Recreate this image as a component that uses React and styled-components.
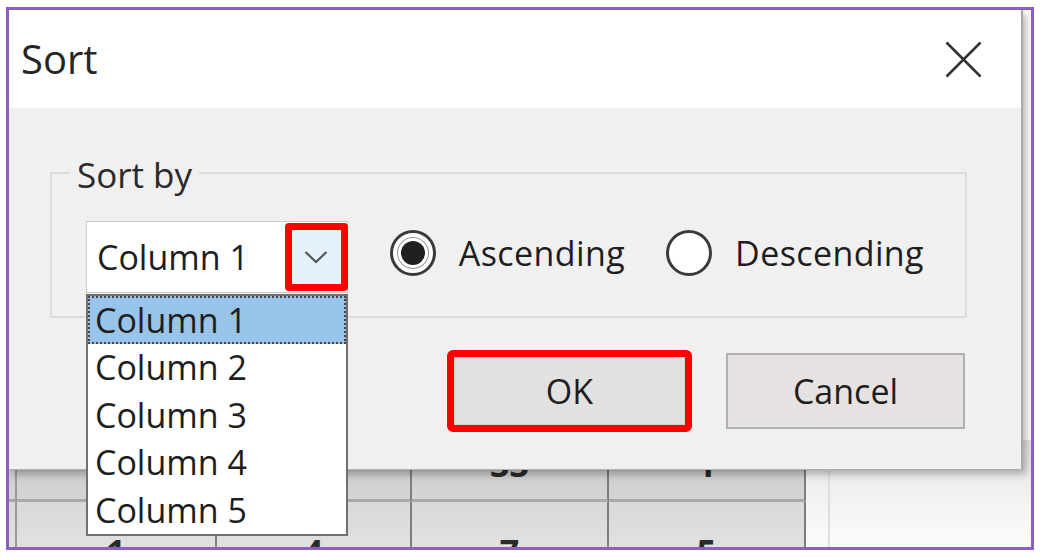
import React from 'react';
import styled, { createGlobalStyle } from 'styled-components';

const Global = createGlobalStyle`
  html, body { margin: 0; padding: 0; background: #ffffff; }
  body { font-family: "Open Sans", "Noto Sans", sans-serif; color: #1e1e1e; }
`;

const Frame = styled.div`
  position: relative;
  margin: 7px 0 0 6px;
  width: 1028px;
  height: 543px;
  box-sizing: border-box;
  border: 3px solid #8d5fc1;
  overflow: hidden;
`;

/* ---------- spreadsheet behind the dialog ---------- */
const Sheet = styled.div`
  display: grid;
  grid-template-columns: 8px 200px 195px 197px 197px 24px 1fr;
  grid-template-rows: 430px 62px 1fr;
  height: 100%;
`;

const Blank = styled.div`
  grid-column: 1 / -1;
  background: #ffffff;
`;

const Cell = styled.div`
  box-sizing: border-box;
  display: flex;
  justify-content: center;
  font-size: 34px;
  line-height: 34px;
  font-weight: 700;
  color: #2a2a2a;
  padding-top: ${p => (p.$row === 1 ? '7px' : '32px')};
  background: ${p =>
    p.$sel
      ? p.$row === 1
        ? 'linear-gradient(#c7c7c7, #d5d5d5)'
        : 'linear-gradient(#d9d9d9, #e6e3e3)'
      : p.$row === 1
        ? 'linear-gradient(#e6e6e6, #f2f2f2)'
        : 'linear-gradient(#f3f3f3, #ffffff)'};
  border-right: ${p => (p.$line ? `2px solid ${p.$line}` : 'none')};
  border-bottom: ${p => (p.$row === 1 && p.$sel ? '3px solid #a9a9a9' : 'none')};
`;

const sheetCols = [
  { sel: true, line: '#9a9a9a' },
  { sel: true, line: '#7d7d7d' },
  { sel: true, line: '#7d7d7d' },
  { sel: true, line: '#7d7d7d' },
  { sel: true, line: '#7d7d7d' },
  { sel: false, line: '#dedede' },
  { sel: false, line: null },
];
const row1 = ['', '', '', '33', '1', '', ''];
const row2 = ['', '1', '4', '7', '5', '', ''];

/* ---------- dialog ---------- */
const Dialog = styled.div`
  position: absolute;
  top: 0;
  left: 0;
  width: 1014px;
  height: 460px;
  box-sizing: border-box;
  background: #f0f0f0;
  border-right: 2px solid #a8a8a8;
  border-bottom: 1px solid #b0b0b0;
  box-shadow: 3px 4px 8px rgba(0, 0, 0, 0.3);
  display: flex;
  flex-direction: column;
`;

const TitleBar = styled.div`
  height: 98px;
  flex: none;
  background: #ffffff;
  display: flex;
  align-items: center;
  justify-content: space-between;
  padding: 0 39px 0 12px;
`;

const Title = styled.div`
  font-size: 40px;
  line-height: 48px;
  color: #262626;
`;

const CloseIcon = styled.svg`
  width: 37px;
  height: 37px;
  display: block;
`;

const Body = styled.div`
  flex: 1;
  padding: 64px 54px 0 41px;
  display: flex;
  flex-direction: column;
`;

const GroupBox = styled.div`
  position: relative;
  height: 146px;
  box-sizing: border-box;
  border: 2px solid #dddddd;
  display: flex;
  align-items: flex-start;
  padding: 47px 0 0 34px;
`;

const Legend = styled.div`
  position: absolute;
  top: -21px;
  left: 18px;
  padding: 0 7px;
  background: #f0f0f0;
  font-size: 35px;
  line-height: 44px;
  color: #2a2a2a;
`;

const Combo = styled.div`
  position: relative;
  width: 262px;
  height: 72px;
  box-sizing: border-box;
  background: #ffffff;
  border: 1px solid #cacaca;
  display: flex;
  align-items: center;
  z-index: 2;
`;

const ComboValue = styled.div`
  flex: 1;
  padding-left: 10px;
  font-size: 34px;
  line-height: 44px;
`;

const DropButton = styled.div`
  width: 63px;
  height: 68px;
  box-sizing: border-box;
  margin-right: -1px;
  border: 7px solid #ff0000;
  border-radius: 4px;
  background: #e5f1fb;
  display: flex;
  align-items: center;
  justify-content: center;
`;

const List = styled.div`
  position: absolute;
  top: calc(100% + 2px);
  left: -1px;
  width: 262px;
  box-sizing: border-box;
  background: #ffffff;
  border: 2px solid #707070;
`;

const Item = styled.div`
  height: 47.5px;
  box-sizing: border-box;
  display: flex;
  align-items: center;
  padding-left: 7px;
  font-size: 34px;
  color: #1e1e1e;
  background: ${p => (p.$active ? '#99c4ea' : '#ffffff')};
  outline: ${p => (p.$active ? '2px dotted #444' : 'none')};
  outline-offset: -2px;
`;

const Radios = styled.div`
  display: flex;
  align-items: center;
  margin: 9px 0 0 42px;
`;

const RadioLabel = styled.div`
  display: flex;
  align-items: center;
  gap: 23px;
  margin-right: 41px;
  font-size: 34px;
  line-height: 46px;
  letter-spacing: 0.4px;
  color: #1e1e1e;
`;

const RadioCircle = styled.div`
  width: 46px;
  height: 46px;
  box-sizing: border-box;
  border-radius: 50%;
  border: 3px solid #3a3a3a;
  background: #ffffff;
  display: flex;
  align-items: center;
  justify-content: center;
`;

const RadioDot = styled.div`
  width: 24px;
  height: 24px;
  border-radius: 50%;
  background: #202020;
  box-shadow: 0 0 0 3px #ffffff, 0 0 0 4px #9a9a9a;
`;

const Buttons = styled.div`
  display: flex;
  justify-content: flex-end;
  align-items: center;
  gap: 34px;
  margin-top: 32px;
  padding-right: 2px;
`;

const FocusRing = styled.div`
  width: 245px;
  height: 82px;
  box-sizing: border-box;
  border: 7px solid #ff0000;
  border-radius: 6px;
  display: flex;
`;

const Button = styled.div`
  box-sizing: border-box;
  display: flex;
  align-items: center;
  justify-content: center;
  font-size: 34px;
  color: #1e1e1e;
  background: ${p => (p.$primary ? '#e1e1e1' : '#e6e2e2')};
  border: ${p => (p.$primary ? '1px solid #d0d0d0' : '2px solid #b0b0b0')};
  ${p => (p.$primary ? 'flex: 1;' : 'width: 239px; height: 76px;')}
`;

export default function App() {
  return (
    <>
      <Global />
      <Frame>
        <Sheet>
          <Blank />
          {sheetCols.map((c, i) => (
            <Cell key={'a' + i} $row={1} $sel={c.sel} $line={c.line}>
              {row1[i]}
            </Cell>
          ))}
          {sheetCols.map((c, i) => (
            <Cell key={'b' + i} $row={2} $sel={c.sel} $line={c.line}>
              {row2[i]}
            </Cell>
          ))}
        </Sheet>

        <Dialog>
          <TitleBar>
            <Title>Sort</Title>
            <CloseIcon viewBox="0 0 37 37">
              <path d="M1.5 1.5 L35.5 35.5 M35.5 1.5 L1.5 35.5" stroke="#333" strokeWidth="2.6" fill="none" />
            </CloseIcon>
          </TitleBar>
          <Body>
            <GroupBox>
              <Legend>Sort by</Legend>
              <Combo>
                <ComboValue>Column 1</ComboValue>
                <DropButton>
                  <svg width="24" height="14" viewBox="0 0 24 14">
                    <path d="M1.5 2 L12 12 L22.5 2" stroke="#555" strokeWidth="2.2" fill="none" />
                  </svg>
                </DropButton>
                <List>
                  {['Column 1', 'Column 2', 'Column 3', 'Column 4', 'Column 5'].map((t, i) => (
                    <Item key={t} $active={i === 0}>{t}</Item>
                  ))}
                </List>
              </Combo>
              <Radios>
                <RadioLabel>
                  <RadioCircle><RadioDot /></RadioCircle>
                  Ascending
                </RadioLabel>
                <RadioLabel>
                  <RadioCircle />
                  Descending
                </RadioLabel>
              </Radios>
            </GroupBox>
            <Buttons>
              <FocusRing>
                <Button $primary>OK</Button>
              </FocusRing>
              <Button>Cancel</Button>
            </Buttons>
          </Body>
        </Dialog>
      </Frame>
    </>
  );
}
